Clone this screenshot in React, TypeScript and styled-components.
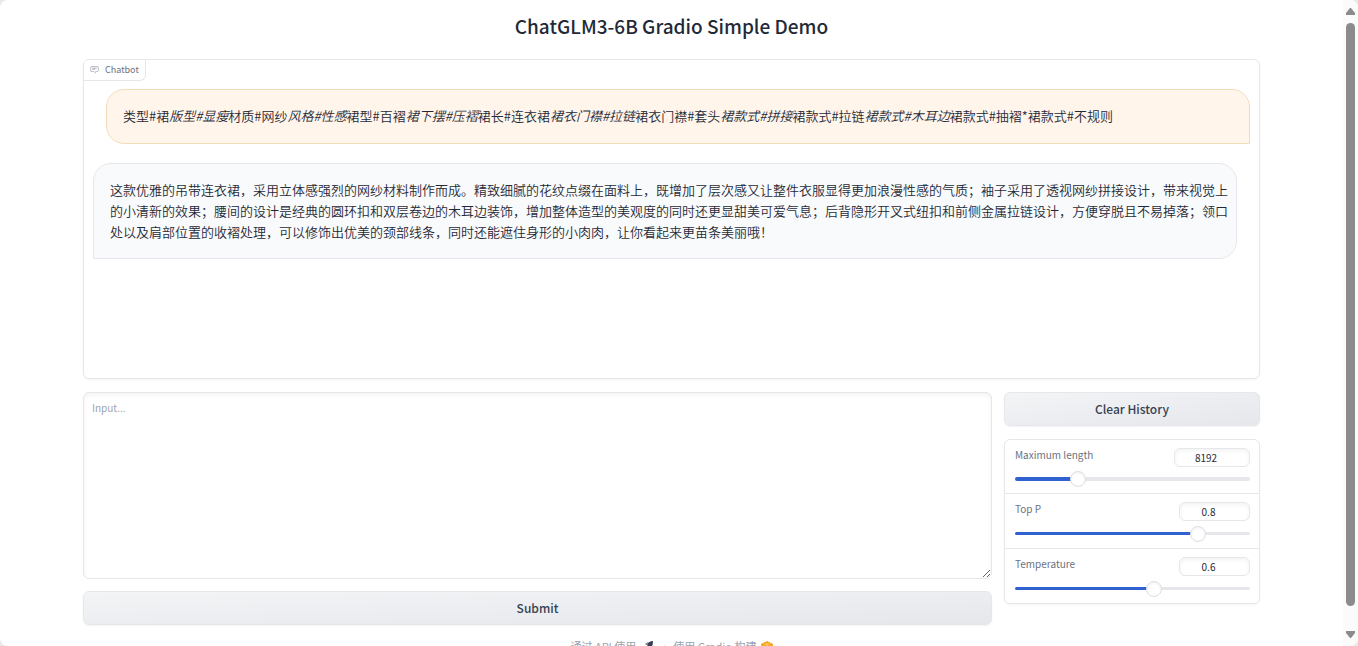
import React, { useState } from "react";
import styled, { createGlobalStyle } from "styled-components";

const Global = createGlobalStyle`
  *, *::before, *::after { box-sizing: border-box; }
  body {
    margin: 0;
    background: #e9e9ea;
    color: #1f2937;
    font-family: "Noto Sans CJK SC", "Noto Sans", sans-serif;
    font-size: 13px;
    line-height: 20px;
  }
  button, input, textarea { font: inherit; color: inherit; margin: 0; }
`;

const Shell = styled.div`
  display: flex;
  height: 100vh;
  background: #fff;
  border-radius: 8px;
  overflow: hidden;
`;

const Page = styled.main`
  flex: 1;
  min-width: 0;
  overflow: hidden;
  padding: 12px 83px 0;
  display: flex;
  flex-direction: column;
`;

const Title = styled.h1`
  margin: 0 0 19px;
  font-size: 19px;
  line-height: 28px;
  font-weight: 500;
  text-align: center;
`;

const Panel = styled.section`
  flex: none;
  min-height: 320px;
  border: 1px solid #e5e7eb;
  border-radius: 6px;
  box-shadow: 0 1px 2px rgba(0, 0, 0, 0.05);
  overflow: hidden;
`;

const PanelLabel = styled.h2`
  display: inline-flex;
  align-items: center;
  gap: 6px;
  height: 21px;
  margin: 0;
  padding: 0 6px 1px;
  border: solid #e5e7eb;
  border-width: 0 1px 1px 0;
  border-radius: 0 0 6px 0;
  color: #6b7280;
  font-size: 9px;
  line-height: 18px;
  font-weight: 400;
  vertical-align: top;
  svg { width: 9px; height: 9px; }
`;

const Messages = styled.div`
  display: flex;
  flex-direction: column;
  gap: 19px;
  padding: 8px 9px 0;
`;

const Bubble = styled.div<{ $user?: boolean }>`
  width: calc(100% - 13px);
  min-height: 55px;
  align-self: ${(p) => (p.$user ? "flex-end" : "flex-start")};
  padding: 15px 8px 16px 16px;
  border: 1px solid ${(p) => (p.$user ? "#f3dcb8" : "#e5e7eb")};
  border-radius: ${(p) => (p.$user ? "18px 18px 0 18px" : "18px 18px 18px 0")};
  background: ${(p) => (p.$user ? "#fff5eb" : "#f9fafb")};
  font-family: "Liberation Sans Narrow", "Noto Sans CJK SC", sans-serif;
  font-weight: 350;
  line-height: 21px;
`;

const Columns = styled.div`
  display: flex;
  align-items: flex-start;
  gap: 12px;
  margin-top: 13px;
`;

const InputColumn = styled.div`
  flex: 1;
  min-width: 0;
  display: flex;
  flex-direction: column;
  gap: 12px;
`;

const SideColumn = styled.div`
  width: 256px;
  display: flex;
  flex-direction: column;
  gap: 13px;
`;

const Prompt = styled.textarea`
  display: block;
  width: 100%;
  height: 187px;
  padding: 5px 8px;
  border: 1px solid #e5e7eb;
  border-radius: 6px;
  background: #fff;
  box-shadow: inset 0 2px 4px rgba(0, 0, 0, 0.05);
  font-size: 10px;
  resize: vertical;
  &::placeholder { color: #9ca3af; }
`;

const Action = styled.button`
  height: 34px;
  padding: 0 16px 1px;
  border: 1px solid #e5e7eb;
  border-radius: 6px;
  background: linear-gradient(to bottom right, #f3f4f6, #e5e7eb);
  box-shadow: 0 1px 2px rgba(0, 0, 0, 0.05);
  color: #374151;
  font-size: 12px;
  font-weight: 500;
`;

const Settings = styled.div`
  border: 1px solid #e5e7eb;
  border-radius: 6px;
  box-shadow: 0 1px 2px rgba(0, 0, 0, 0.05);
`;

const Setting = styled.div`
  height: 53px;
  padding: 8px 9px 0 10px;
  & + & { height: 55px; border-top: 1px solid #e5e7eb; }
`;

const SettingHead = styled.div`
  display: flex;
  justify-content: space-between;
  align-items: flex-start;
`;

const SettingLabel = styled.label`
  color: #6b7280;
  font-size: 10px;
  line-height: 14px;
`;

const NumberBox = styled.input<{ $wide?: boolean }>`
  width: ${(p) => (p.$wide ? 76 : 71)}px;
  height: 19px;
  padding: 0 12px 0 0;
  border: 1px solid #e5e7eb;
  border-radius: 6px;
  box-shadow: inset 0 2px 4px rgba(0, 0, 0, 0.05);
  background: #fff;
  font-size: 10px;
  line-height: 16px;
  text-align: center;
  appearance: textfield;
  &::-webkit-inner-spin-button { appearance: none; }
`;

const Range = styled.input<{ $thick?: boolean }>`
  appearance: none;
  display: block;
  width: 100%;
  height: 16px;
  margin-top: 4px;
  background: transparent;
  &::-webkit-slider-runnable-track {
    height: ${(p) => (p.$thick ? 4 : 3)}px;
    border-radius: 2px;
    background: linear-gradient(#2f62d0, #2f62d0) no-repeat left / var(--fill) 100% #e5e7eb;
  }
  &::-webkit-slider-thumb {
    appearance: none;
    width: 16px;
    height: 16px;
    margin-top: -6px;
    border: 1px solid #dcdee2;
    border-radius: 50%;
    background: #fff;
    box-shadow: inset 0 1px 3px rgba(0, 0, 0, 0.06);
  }
`;

const Footer = styled.footer`
  display: flex;
  justify-content: center;
  align-items: center;
  gap: 3px;
  margin-top: 11px;
  color: #9ca3af;
  font-size: 11px;
`;

const FooterLink = styled.a<{ $gap: number }>`
  display: inline-flex;
  align-items: center;
  gap: ${(p) => p.$gap}px;
  color: inherit;
  text-decoration: none;
  svg { width: 12px; height: 12px; }
`;

const ScrollBar = styled.div`
  flex: none;
  width: 15px;
  display: flex;
  flex-direction: column;
  align-items: center;
  padding: 8px 0 8px 0;
  background: #fbfbfb;
  svg { flex: none; width: 9px; height: 8px; }
`;

const ScrollTrack = styled.div`
  flex: 1;
  width: 9px;
  margin: 7px 0 24px;
`;

const ScrollThumb = styled.div`
  height: 100%;
  border-radius: 5px;
  background: #8b8b8b;
`;

type SliderProps = { id: string; label: string; initial: number; min: number; max: number; step: number; thick?: boolean };

function SliderSetting({ id, label, initial, min, max, step, thick }: SliderProps) {
  const [value, setValue] = useState(initial);
  const fill = `${((value - min) / (max - min)) * 100}%`;
  const change = (e: React.ChangeEvent<HTMLInputElement>) => setValue(Number(e.target.value));
  return (
    <Setting>
      <SettingHead>
        <SettingLabel htmlFor={id}>{label}</SettingLabel>
        <NumberBox id={id} type="number" min={min} max={max} step={step} value={value} onChange={change} $wide={thick} />
      </SettingHead>
      <Range
        type="range"
        aria-label={label}
        min={min}
        max={max}
        step={step}
        value={value}
        onChange={change}
        $thick={thick}
        style={{ "--fill": fill } as React.CSSProperties}
      />
    </Setting>
  );
}

export default function App() {
  return (
    <>
      <Global />
      <Shell>
        <Page>
          <Title>ChatGLM3-6B Gradio Simple Demo</Title>
          <Panel>
            <PanelLabel>
              <svg viewBox="0 0 32 32" fill="currentColor" opacity="0.8" aria-hidden="true">
                <path d="M17.74 30 16 29l4-7h6a2 2 0 0 0 2-2V8a2 2 0 0 0-2-2H6a2 2 0 0 0-2 2v12a2 2 0 0 0 2 2h9v2H6a4 4 0 0 1-4-4V8a4 4 0 0 1 4-4h20a4 4 0 0 1 4 4v12a4 4 0 0 1-4 4h-4.84Z" />
                <path d="M8 10h16v2H8zM8 16h10v2H8z" />
              </svg>
              Chatbot
            </PanelLabel>
            <Messages>
              <Bubble $user>
                类型#裙<em>版型#显瘦</em>材质#网纱<em>风格#性感</em>裙型#百褶<em>裙下摆#压褶</em>裙长#连衣裙<em>裙衣门襟#拉链</em>裙衣门襟#套头<em>裙款式#拼接</em>裙款式#拉链<em>裙款式#木耳边</em>裙款式#抽褶*裙款式#不规则
              </Bubble>
              <Bubble>
                这款优雅的吊带连衣裙，采用立体感强烈的网纱材料制作而成。精致细腻的花纹点缀在面料上，既增加了层次感又让整件衣服显得更加浪漫性感的气质；袖子采用了透视网纱拼接设计，带来视觉上的小清新的效果；腰间的设计是经典的圆环扣和双层卷边的木耳边装饰，增加整体造型的美观度的同时还更显甜美可爱气息；后背隐形开叉式纽扣和前侧金属拉链设计，方便穿脱且不易掉落；领口处以及肩部位置的收褶处理，可以修饰出优美的颈部线条，同时还能遮住身形的小肉肉，让你看起来更苗条美丽哦！
              </Bubble>
            </Messages>
          </Panel>
          <Columns>
            <InputColumn>
              <Prompt aria-label="Input" placeholder="Input..." />
              <Action type="button">Submit</Action>
            </InputColumn>
            <SideColumn>
              <Action type="button">Clear History</Action>
              <Settings>
                <SliderSetting id="max-length" label="Maximum length" initial={8192} min={0} max={32768} step={1} thick />
                <SliderSetting id="top-p" label="Top P" initial={0.8} min={0} max={1} step={0.01} />
                <SliderSetting id="temperature" label="Temperature" initial={0.6} min={0} max={1} step={0.01} />
              </Settings>
            </SideColumn>
          </Columns>
          <Footer>
            <FooterLink href="#api" $gap={8}>
              通过 API 使用
              <svg viewBox="0 0 12 12" aria-hidden="true">
                <path d="M9 1C6 1 4 2 3 5l3 4c2-2 3-4 3-8Z" fill="#374151" />
                <path d="M4 2 1 4l2 1 1-3ZM9 7 7 11V8l2-1Z" fill="#6b7280" />
              </svg>
            </FooterLink>
            ·
            <FooterLink href="#gradio" $gap={4}>
              使用 Gradio 构建
              <svg viewBox="0 0 12 12" aria-hidden="true">
                <path d="m6 1 6 3v2L6 9 0 6V4Z" fill="#f5a623" />
                <path d="m6 3 3 1-3 2-3-2Z" fill="#ffc55a" />
                <path d="m0 7 6 3 6-3v2l-6 3-6-3Z" fill="#f08a24" />
              </svg>
            </FooterLink>
          </Footer>
        </Page>
        <ScrollBar aria-hidden="true">
          <svg viewBox="0 0 9 8"><path d="M4 0h1l4 5v2H0V5Z" fill="#8b8b8b" /></svg>
          <ScrollTrack><ScrollThumb /></ScrollTrack>
          <svg viewBox="0 0 9 8"><path d="M4 8h1l4-5V1H0v2Z" fill="#8b8b8b" /></svg>
        </ScrollBar>
      </Shell>
    </>
  );
}
